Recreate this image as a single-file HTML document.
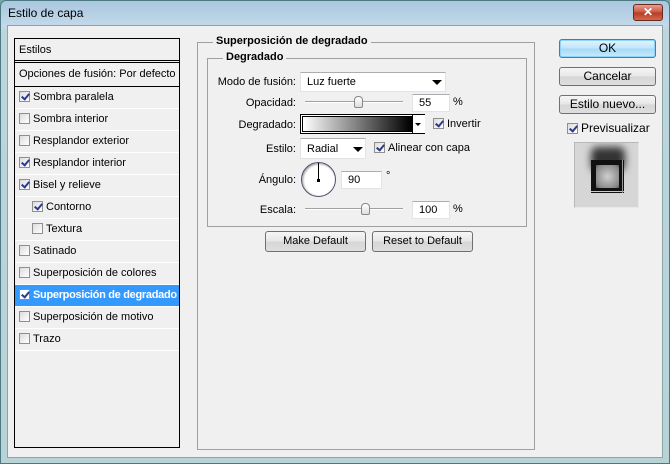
<!DOCTYPE html>
<html><head><meta charset="utf-8"><style>
*{margin:0;padding:0;box-sizing:border-box}
body{width:670px;height:464px;overflow:hidden;font-family:"Liberation Sans",sans-serif;font-size:11px;color:#000;background:#7aa8a8;position:relative}
.a{position:absolute}
.frame{left:0;top:0;width:670px;height:464px;background:linear-gradient(#a9c7de,#c3d9ea 25px,#bcd6dc 30px,#b7d3d6);border:1px solid #4c7a82;border-radius:6px 6px 0 0}
.client{left:7px;top:25px;width:656px;height:433px;background:#f0f0f0;border:1px solid #8aa4a8}
.title{left:8px;top:6px;font-size:12px;color:#000}
.close{left:633px;top:4px;width:30px;height:17px;border:1px solid #6b2a1e;border-radius:3px;background:linear-gradient(#e8a090,#c8553e 50%,#b83a22 51%,#d06a4c);color:#fff;font-weight:bold;font-size:12px;text-align:center;line-height:14px}
.list{left:14px;top:38px;width:166px;height:410px;border:1px solid #000;background:#f0f0f0;overflow:hidden}
.row{position:absolute;left:0;width:164px;height:22px;border-bottom:1px solid #fff;line-height:21px;padding-left:4px;white-space:nowrap;overflow:hidden}
.cb{display:inline-block;width:11px;height:11px;border:1px solid #8f8f8f;background:linear-gradient(135deg,#dcdcdc,#fff);vertical-align:-2px;margin-right:3px;position:relative}
.cb.on::after{content:"";position:absolute;left:3px;top:0px;width:3px;height:6px;border:solid #2b3a8c;border-width:0 2px 2px 0;transform:rotate(40deg)}
.sel{background:#3399ff;color:#fff;font-weight:bold;letter-spacing:-0.3px}
.grp{border:1px solid #a0a0a0;}
.gt{position:absolute;background:#f0f0f0;font-weight:bold;padding:0 3px}
.lbl{position:absolute;text-align:right;width:90px}
.inp{position:absolute;background:#fff;border:1px solid #e3e3e3;border-top-color:#abadb3;padding-left:6px;line-height:17px}
.btn{position:absolute;border:1px solid #707070;border-radius:3px;background:linear-gradient(#f6f6f6,#e6e6e6 50%,#d6d6d6 51%,#dedede);text-align:center;line-height:17px}
.track{position:absolute;height:2px;border-top:1px solid #a0a0a0;border-bottom:1px solid #fff}
.thumb{position:absolute;width:9px;height:12px;border:1px solid #888;border-radius:4px 4px 2px 2px;background:linear-gradient(#fff,#ddd)}
.arrow{position:absolute;width:0;height:0;border-left:5px solid transparent;border-right:5px solid transparent;border-top:5px solid #000}
</style></head><body>
<div class="a frame"></div>
<div class="a title">Estilo de capa</div>
<div class="a close">✕</div>
<div class="a client"></div>

<div class="a list">
<div class="row" style="top:0;height:24px;line-height:22px;border-bottom:3px double #000;padding-left:4px">Estilos</div>
<div class="row" style="top:25px;height:23px;border-bottom:1px solid #000">Opciones de fusión: Por defecto</div>
<div class="row" style="top:48px"><span class="cb on"></span>Sombra paralela</div>
<div class="row" style="top:70px"><span class="cb"></span>Sombra interior</div>
<div class="row" style="top:92px"><span class="cb"></span>Resplandor exterior</div>
<div class="row" style="top:114px"><span class="cb on"></span>Resplandor interior</div>
<div class="row" style="top:136px"><span class="cb on"></span>Bisel y relieve</div>
<div class="row" style="top:158px;padding-left:17px"><span class="cb on"></span>Contorno</div>
<div class="row" style="top:180px;padding-left:17px"><span class="cb"></span>Textura</div>
<div class="row" style="top:202px"><span class="cb"></span>Satinado</div>
<div class="row" style="top:224px"><span class="cb"></span>Superposición de colores</div>
<div class="row sel" style="top:246px"><span class="cb on" style="background:#fff"></span>Superposición de degradado</div>
<div class="row" style="top:268px"><span class="cb"></span>Superposición de motivo</div>
<div class="row" style="top:290px"><span class="cb"></span>Trazo</div>
</div>

<div class="a grp" style="left:197px;top:42px;width:338px;height:408px"></div>
<div class="gt" style="left:213px;top:35px">Superposición de degradado</div>
<div class="a grp" style="left:207px;top:58px;width:320px;height:169px"></div>
<div class="gt" style="left:223px;top:51px">Degradado</div>

<div class="lbl" style="left:206px;top:76px">Modo de fusión:</div>
<div class="inp" style="left:300px;top:72px;width:146px;height:20px;line-height:19px">Luz fuerte</div>
<div class="arrow" style="left:432px;top:80px"></div>

<div class="lbl" style="left:206px;top:97px">Opacidad:</div>
<div class="track" style="left:305px;top:101px;width:98px"></div>
<div class="thumb" style="left:354px;top:96px"></div>
<div class="inp" style="left:412px;top:94px;width:38px;height:18px">55</div>
<div class="a" style="left:453px;top:96px">%</div>

<div class="lbl" style="left:206px;top:119px">Degradado:</div>
<div class="a" style="left:300px;top:114px;width:125px;height:20px;border:1px solid #000;background:#fff;padding:1px">
<div style="width:110px;height:16px;background:linear-gradient(90deg,#fff,#000);border:1px solid #000"></div></div>
<div class="a" style="left:412px;top:115px;width:13px;height:18px;border-left:1px solid #000;background:#fff"></div>
<div class="a" style="left:415px;top:123px;border-left:3px solid transparent;border-right:3px solid transparent;border-top:3px solid #000"></div>
<div class="a" style="left:433px;top:118px"><span class="cb on"></span>Invertir</div>

<div class="lbl" style="left:206px;top:143px">Estilo:</div>
<div class="inp" style="left:300px;top:138px;width:66px;height:21px;line-height:20px">Radial</div>
<div class="arrow" style="left:353px;top:147px"></div>
<div class="a" style="left:374px;top:142px"><span class="cb on"></span>Alinear con capa</div>

<div class="lbl" style="left:206px;top:174px">Ángulo:</div>
<div class="a" style="left:301px;top:162px;width:35px;height:35px;border:1px solid #505070;border-radius:50%;background:#fff;box-shadow:inset 1px 1px 2px #999"></div>
<div class="a" style="left:318px;top:163px;width:1px;height:17px;background:#000"></div>
<div class="a" style="left:317px;top:179px;width:3px;height:3px;background:#000"></div>
<div class="inp" style="left:341px;top:171px;width:41px;height:18px">90</div>
<div class="a" style="left:386px;top:170px">°</div>

<div class="lbl" style="left:206px;top:204px">Escala:</div>
<div class="track" style="left:305px;top:208px;width:98px"></div>
<div class="thumb" style="left:361px;top:203px"></div>
<div class="inp" style="left:412px;top:201px;width:38px;height:18px">100</div>
<div class="a" style="left:453px;top:203px">%</div>

<div class="btn" style="left:265px;top:231px;width:101px;height:21px;line-height:19px">Make Default</div>
<div class="btn" style="left:372px;top:231px;width:101px;height:21px;line-height:19px">Reset to Default</div>

<div class="btn" style="left:559px;top:39px;width:97px;height:19px;font-size:12px;border-color:#3c7fb1;background:linear-gradient(#e4f4fc,#bee6fd 50%,#a7d9f5 51%,#c6ebfb);box-shadow:inset 0 0 0 1px #8fd3f8">OK</div>
<div class="btn" style="left:559px;top:67px;width:97px;height:19px;font-size:12px">Cancelar</div>
<div class="btn" style="left:559px;top:95px;width:97px;height:19px;font-size:12px">Estilo nuevo...</div>
<div class="a" style="left:567px;top:121px;font-size:12px"><span class="cb on"></span>Previsualizar</div>

<div class="a" style="left:574px;top:142px;width:65px;height:66px;background:#d6d6d6;border:1px solid #e8e8e8;border-left-color:#b8b8b8;border-top-color:#b8b8b8;overflow:hidden">
<div class="a" style="left:16px;top:4px;width:34px;height:24px;background:#333;filter:blur(4px);border-radius:6px"></div>
<div class="a" style="left:16px;top:17px;width:33px;height:33px;background:#111"></div>
<div class="a" style="left:21px;top:22px;width:23px;height:23px;background:radial-gradient(circle,#cfcfcf,#888 80%,#555)"></div>
<div class="a" style="left:16px;top:48px;width:33px;height:1px;background:#ccc"></div>
<div class="a" style="left:47px;top:17px;width:1px;height:33px;background:#999"></div>
</div>
</body></html>
